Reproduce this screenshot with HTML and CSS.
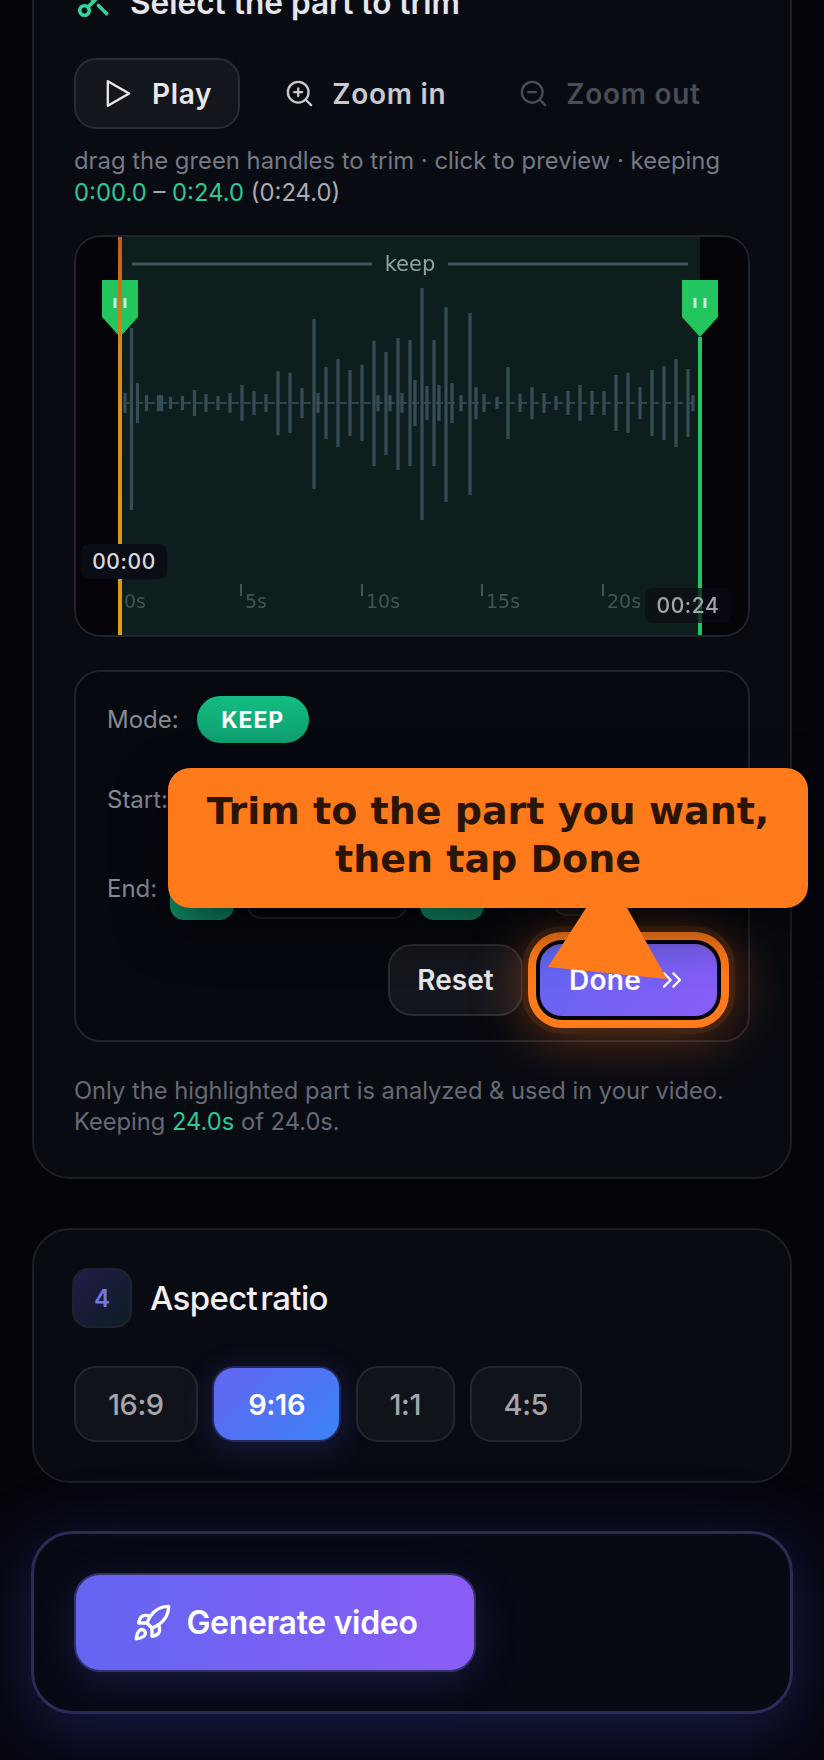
FILE: index.html
```html
<!DOCTYPE html>
<html lang="en">
<head>
<meta charset="utf-8">
<title>Trim</title>
<link rel="stylesheet" href="styles.css">
</head>
<body>
<main class="page">
  <section class="card trim-card">
    <header class="trim-head">
      <svg class="scissors" viewBox="0 0 24 24"><circle cx="6" cy="6" r="3"/><path d="M8.12 8.12 12 12"/><path d="M20 4 8.12 15.88"/><circle cx="6" cy="18" r="3"/><path d="M14.8 14.8 20 20"/></svg>
      <h2 class="trim-title">Select the part to trim</h2>
    </header>
    <div class="tools">
      <button class="tool tool-play"><svg class="ico" viewBox="0 0 24 24"><path d="M4.5 2.5 21 12 4.5 21.5z"/></svg>Play</button>
      <button class="tool"><svg class="ico" viewBox="0 0 24 24"><circle cx="11" cy="11" r="8"/><path d="M21 21l-4.35-4.35M11 8v6M8 11h6"/></svg>Zoom in</button>
      <button class="tool tool-off"><svg class="ico" viewBox="0 0 24 24"><circle cx="11" cy="11" r="8"/><path d="M21 21l-4.35-4.35M8 11h6"/></svg>Zoom out</button>
    </div>
    <p class="hint">drag the green handles to trim · click to preview · keeping <span class="g">0:00.0</span> <span class="dash">–</span> <span class="g">0:24.0</span> <span class="dur">(0:24.0)</span></p>
    <div class="wave">
      <svg class="wave-svg" viewBox="74 235 676 402">
        <defs>
          <linearGradient id="amber" x1="0" y1="0" x2="0" y2="1"><stop offset="0" stop-color="#c25a1c"/><stop offset=".3" stop-color="#d88a1e"/><stop offset="1" stop-color="#dc9c20"/></linearGradient>
        </defs>
        <rect class="w-out" x="74" y="235" width="676" height="402"/>
        <rect class="w-keep" x="120" y="235" width="580" height="402"/>
        <g class="w-blur">
          <path class="w-line" d="M132 264H372M448 264H688"/>
          <text class="w-keep-t" x="410" y="271">keep</text>
          <path class="w-mid" d="M124 403H694"/>
          <path class="w-bars" d="M125 393V413M131.5 328V510M137.5 383V423M146.5 395V411M158.5 395V411M161.5 395V411M170.5 397V409M182.5 396V410M194.5 390V416M206 394V412M218 396V410M230 393V413M242 385V421M254 391V415M266 394V412M278 371V435M290 373V433M302 388V418M314 319V489M318 393V413M326 367V439M338 359V447M350 370V436M362 365V441M374 341V466M378 395V411M386 352V455M390 395V411M398 338V470M402 393V413M410 340V466M415 380V426M422 288V520M427 386V420M434 340V466M439 385V421M446 307V502M452 383V423M461 395V411M470 313V495M476 387V419M484 394V412M497 397V409M508 367V439M520 394V412M532 387V419M544 393V413M556 396V410M568 391V415M580 385V421M592 391V415M604 391V415M616 375V431M628 373V433M640 387V419M652 370V436M664 366V440M676 359V447M688 369V437M693 395V411"/>
          <path class="w-tick" d="M241 584V596M362 584V596M482 584V596M603 584V596"/>
          <text class="w-lab" x="124" y="608">0s</text>
          <text class="w-lab" x="245" y="608">5s</text>
          <text class="w-lab" x="366" y="608">10s</text>
          <text class="w-lab" x="486" y="608">15s</text>
          <text class="w-lab" x="607" y="608">20s</text>
        </g>
        <polygon class="w-handle" points="102,280 138,280 138,317 120,337 102,317"/>
        <polygon class="w-handle" points="682,280 718,280 718,317 700,337 682,317"/>
        <path class="w-grip" d="M115 298V308M125 298V308M695 298V308M705 298V308"/>
        <rect x="118" y="235" width="4" height="402" fill="url(#amber)"/>
        <rect class="w-end" x="698" y="337" width="4" height="300"/>
      </svg>
      <span class="stamp stamp-a">00:00</span>
      <span class="stamp stamp-b">00:24</span>
    </div>
    <div class="panel">
      <div class="row row-mode"><span class="lbl">Mode:</span><span class="pill">KEEP</span></div>
      <div class="row row-start"><span class="lbl">Start:</span><button class="step">−</button><span class="field">0:00.0</span><button class="step">+</button></div>
      <div class="row row-end"><span class="lbl lbl-end">End:</span><button class="step">−</button><span class="field">0:24.0</span><button class="step">+</button><span class="set"></span></div>
      <div class="actions">
        <button class="reset">Reset</button>
        <button class="done">Done<svg class="chev" viewBox="0 0 24 24"><path d="m6 17 5-5-5-5M13 17l5-5-5-5"/></svg></button>
      </div>
    </div>
    <p class="note">Only the highlighted part is analyzed &amp; used in your video.<br>Keeping <span class="g">24.0s</span> of 24.0s.</p>
  </section>

  <section class="card ratio-card">
    <div class="step-head"><span class="num">4</span><h2 class="step-title">Aspect ratio</h2></div>
    <div class="ratios">
      <button class="ratio">16:9</button>
      <button class="ratio ratio-on">9:16</button>
      <button class="ratio">1:1</button>
      <button class="ratio">4:5</button>
    </div>
  </section>

  <section class="card go-card">
    <button class="go"><svg class="rocket" viewBox="0 0 24 24"><path d="M4.5 16.5c-1.5 1.26-2 5-2 5s3.74-.5 5-2c.71-.84.7-2.13-.09-2.91a2.18 2.18 0 0 0-2.91-.09z"/><path d="m12 15-3-3a22 22 0 0 1 2-3.95A12.88 12.88 0 0 1 22 2c0 2.72-.78 7.5-6 11a22.35 22.35 0 0 1-4 2z"/><path d="M9 12H4s.55-3.03 2-4c1.62-1.08 5 0 5 0"/><path d="M12 15v5s3.03-.55 4-2c1.08-1.62 0-5 0-5"/></svg>Generate video</button>
  </section>
</main>

<div class="tip">Trim to the part you want,<br>then tap Done</div>
<svg class="tip-arrow" viewBox="0 0 824 1760"><polygon points="608,874 548,967 667,979"/></svg>
</body>
</html>
```

FILE: styles.css
```css
* { box-sizing: border-box; }
html, body { margin: 0; padding: 0; }
body {
  position: relative;
  width: 824px;
  height: 1760px;
  overflow: hidden;
  background: #04050b;
  font-family: Inter, "Liberation Sans", sans-serif;
  color: #e8e8ec;
}
button { font-family: inherit; cursor: pointer; }
h2, p { margin: 0; }

.page { display: flex; flex-direction: column; gap: 49px; padding: 0 32px; margin-top: -60px; }
.card {
  background: #090b13;
  border: 2px solid #1d1f27;
  border-radius: 38px;
}

/* trim card */
.trim-card { padding: 47px 40px 41px; height: 1239px; }
.trim-head { display: flex; align-items: center; gap: 17px; height: 38px; margin-top: -7px; }
.scissors { width: 38px; height: 38px; margin-left: 1px; fill: none; stroke: #34d399; stroke-width: 2.3; stroke-linecap: round; stroke-linejoin: round; }
.trim-title { font-size: 31.6px; font-weight: 600; color: #e6e6ea; position: relative; top: 1px; white-space: nowrap; }

.tools { display: flex; gap: 16px; margin-top: 38px; }
.tool {
  display: flex; align-items: center; gap: 17px;
  height: 71px; padding: 0 26px;
  background: transparent; border: 2px solid transparent; border-radius: 22px;
  color: #c8cad0; font-size: 28px; font-weight: 600; letter-spacing: .025em;
}
.tool-play { background: #14161d; border-color: #2a2c34; color: #e8e8ec; gap: 19px; }
.tool-off { color: #4a4d55; }
.ico { width: 31px; height: 31px; fill: none; stroke: currentColor; stroke-width: 1.8; stroke-linecap: round; stroke-linejoin: round; }

.hint { margin-top: 16px; font-size: 23.85px; line-height: 32px; color: #757984; }
.g { color: #2fc796; }
.dash { color: #a3a6ae; }
.dur { color: #a9acb4; }

/* waveform */
.wave { position: relative; height: 402px; margin-top: 26px; border-radius: 26px; overflow: hidden; }
.wave::after { content: ""; position: absolute; inset: 0; border: 2px solid #22242c; border-radius: 26px; pointer-events: none; }
.wave-svg { display: block; width: 676px; height: 402px; }
.w-out { fill: #030308; }
.w-keep { fill: #0e1e1c; }
.w-blur { filter: blur(.7px); }
.w-line { stroke: #3e525a; stroke-width: 3; fill: none; }
.w-keep-t { font-family: "DejaVu Sans", sans-serif; font-size: 21px; fill: #93a2a6; text-anchor: middle; }
.w-mid { stroke: #3a535c; stroke-width: 2; stroke-dasharray: 7 5; fill: none; opacity: .75; }
.w-bars { stroke: #354d56; stroke-width: 3.2; fill: none; }
.w-tick { stroke: #3e5656; stroke-width: 2; fill: none; }
.w-lab { font-family: "DejaVu Sans", sans-serif; font-size: 19px; fill: #3e5656; }
.w-handle { fill: #22c55e; }
.w-grip { stroke: #c9f3d8; stroke-width: 3; fill: none; }
.w-end { fill: #22c55e; }

.stamp {
  position: absolute; height: 35px; width: 86px;
  display: flex; align-items: center; justify-content: center;
  border-radius: 8px; font-size: 21px; font-weight: 500; letter-spacing: .03em;
}
.stamp-a { left: 7px; top: 309px; background: #0b0d14; color: #d8dbe0; }
.stamp-b { left: 571px; top: 353px; background: rgba(11, 13, 20, .72); color: #a0a6ae; }

/* panel */
.panel {
  margin-top: 33px; height: 372px; padding: 24px 31px 0;
  background: #060810; border: 2px solid #20222a; border-radius: 26px;
  display: flex; flex-direction: column;
}
.row { display: flex; align-items: center; gap: 18px; }
.lbl { font-size: 24px; color: #868a94; }
.lbl-end { position: relative; top: -2px; }
.pill {
  display: flex; align-items: center; justify-content: center; width: 112px; height: 47px;
  background: linear-gradient(180deg, #12bd80, #0f9e70); border-radius: 24px;
  color: #fff; font-size: 23px; font-weight: 700; letter-spacing: .04em;
}
.row-start { height: 60px; margin-top: 26px; gap: 12px; }
.row-end { height: 60px; margin-top: 31px; gap: 13px; }
.step { width: 64px; height: 60px; border: 0; border-radius: 14px; background: linear-gradient(135deg, #12a876, #0e8a64); color: #fff; font-size: 24px; }
.field { width: 160px; height: 58px; display: flex; align-items: center; justify-content: center; border: 2px solid #23252d; border-radius: 14px; font-size: 21px; }
.set { width: 70px; height: 52px; margin-left: 56px; background: #0c0e13; border: 2px solid #1f2128; border-radius: 14px; }
.actions { display: flex; justify-content: flex-end; gap: 17px; margin-top: 24px; }
.reset {
  width: 135px; height: 72px;
  background: #14161d; border: 2px solid #2a2c33; border-radius: 24px;
  color: #e6e6e8; font-size: 28px; font-weight: 600;
}
.done {
  position: relative;
  width: 177px; height: 72px;
  display: flex; align-items: center; justify-content: center; gap: 15px;
  border: 0; border-radius: 22px;
  background: linear-gradient(135deg, #5f66f1, #8b5cf6);
  color: #fff; font-size: 28px; font-weight: 600; letter-spacing: .01em;
  box-shadow: 0 0 0 4px #04050b, 0 0 0 12px #ff7a1a, 0 0 0 18px rgba(70, 38, 16, .85), 0 4px 56px 14px rgba(255, 122, 26, .42);
}
.chev { width: 32px; height: 32px; fill: none; stroke: #fff; stroke-width: 1.7; stroke-linecap: round; stroke-linejoin: round; }

.note { margin-top: 33px; font-size: 23.7px; line-height: 31px; color: #666a74; }

/* aspect ratio */
.ratio-card { height: 255px; padding: 38px 40px 0; }
.step-head { display: flex; align-items: center; gap: 18px; margin-left: -2px; }
.num {
  width: 60px; height: 60px; display: flex; align-items: center; justify-content: center;
  border: 2px solid #1f2130; border-radius: 17px;
  background: linear-gradient(135deg, #221d48, #0e1c24);
  color: #7078e8; font-size: 24px; font-weight: 600;
}
.step-title { font-size: 33px; font-weight: 500; letter-spacing: -.02em; word-spacing: -.15em; color: #f0f0f4; }
.ratios { display: flex; gap: 14.5px; margin-top: 38px; }
.ratio {
  height: 76px; padding: 0 32px;
  background: #11131a; border: 2px solid #24262d; border-radius: 22px;
  color: #a4a6ac; font-size: 29px; font-weight: 500; letter-spacing: -.015em;
}
.ratio-on {
  padding: 0 34px;
  background: linear-gradient(135deg, #6366f1, #3b82f6); border-color: #26285a;
  color: #fff; font-weight: 600;
  box-shadow: 0 6px 30px rgba(80, 90, 240, .22);
}

/* generate */
.go-card {
  height: 183px; padding: 39px 40px 0; margin-top: -1px; margin-left: -1px; margin-right: -1px;
  background: #070913; border: 3px solid #2b2b57; border-radius: 42px;
  box-shadow: 0 16px 70px 10px rgba(80, 90, 230, .24);
}
.go {
  width: 402px; height: 99px;
  display: flex; align-items: center; justify-content: center; gap: 14px;
  background: linear-gradient(90deg, #6366f1, #8b5cf6); border: 2px solid #33306a; border-radius: 26px;
  color: #fff; font-size: 32px; font-weight: 600; letter-spacing: -.01em;
  box-shadow: 0 10px 44px rgba(90, 95, 240, .2);
}
.rocket { width: 40px; height: 40px; fill: none; stroke: #fff; stroke-width: 2; stroke-linecap: round; stroke-linejoin: round; }

/* overlay tip */
.tip {
  position: absolute; left: 168px; top: 768px; width: 640px; height: 140px; z-index: 3;
  display: flex; align-items: center; justify-content: center; text-align: center;
  padding-bottom: 6px;
  background: #ff7a1a; border-radius: 22px;
  box-shadow: 0 20px 50px rgba(0, 0, 0, .55);
  color: #2a1505; font-family: "DejaVu Sans", sans-serif; font-size: 38px; font-weight: 700; line-height: 48px;
}
.tip-arrow { position: absolute; left: 0; top: 0; width: 824px; height: 1760px; z-index: 4; pointer-events: none; }
.tip-arrow polygon { fill: #ff7a1a; }
```
